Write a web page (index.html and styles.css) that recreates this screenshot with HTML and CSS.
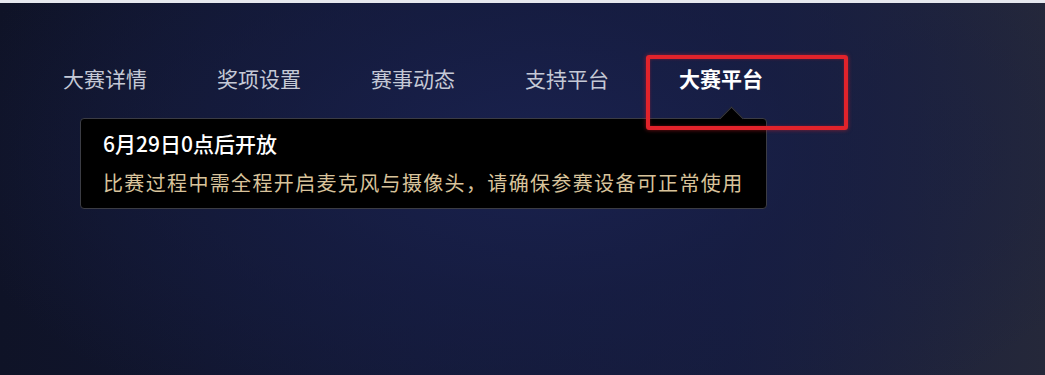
FILE: index.html
```html
<!DOCTYPE html>
<html lang="zh-CN">
<head>
<meta charset="utf-8">
<title>大赛平台</title>
<link rel="stylesheet" href="styles.css">
</head>
<body>
<div class="top-strip"></div>
<main class="stage">
  <nav class="tabs">
    <a class="tab">大赛详情</a>
    <a class="tab">奖项设置</a>
    <a class="tab">赛事动态</a>
    <a class="tab">支持平台</a>
    <a class="tab active">大赛平台</a>
  </nav>
  <div class="tooltip">
    <p class="tip-title">6月29日0点后开放</p>
    <p class="tip-desc">比赛过程中需全程开启麦克风与摄像头，请确保参赛设备可正常使用</p>
  </div>
  <div class="highlight"></div>
</main>
</body>
</html>
```

FILE: styles.css
```css
html, body {
  margin: 0;
  padding: 0;
}
body {
  width: 1045px;
  height: 375px;
  overflow: hidden;
  font-family: "Noto Sans CJK SC", "Noto Sans", sans-serif;
  background: #121628;
}
.top-strip {
  height: 3px;
  background: #e6e8ee;
}
.stage {
  position: relative;
  height: 372px;
  background:
    radial-gradient(ellipse 600px 320px at 540px 150px, rgba(26, 34, 80, 0.9) 0%, rgba(23, 30, 70, 0.65) 45%, rgba(18, 22, 44, 0) 100%),
    linear-gradient(90deg, #0f1327 0%, #131937 40%, #161c3c 70%, #25283a 100%);
  box-sizing: border-box;
  padding-top: 61px;
}
.tabs {
  display: flex;
  gap: 70px;
  padding-left: 63px;
}
.tab {
  font-size: 21px;
  line-height: 28px;
  color: #c5c9d6;
  width: 84px;
  white-space: nowrap;
}
.tab.active {
  color: #ffffff;
  font-weight: 700;
}
.tooltip {
  position: relative;
  margin: 26px 0 0 80px;
  width: 687px;
  box-sizing: border-box;
  background: #000;
  border: 1px solid #3b3c44;
  border-radius: 4px;
  padding: 12px 0 13px 22px;
}
.tooltip::before {
  content: "";
  position: absolute;
  left: 642px;
  top: -9px;
  width: 16px;
  height: 16px;
  background: #000;
  border-top: 1px solid #3b3c44;
  border-left: 1px solid #3b3c44;
  transform: rotate(45deg);
}
.tip-title {
  margin: 0;
  font-size: 21px;
  line-height: 24px;
  font-weight: 500;
  color: #ffffff;
}
.tip-desc {
  margin: 16px 0 0;
  font-size: 20px;
  line-height: 24px;
  color: #d8c39b;
  letter-spacing: 1.35px;
  white-space: nowrap;
}
.highlight {
  position: absolute;
  left: 646px;
  top: 52px;
  width: 202px;
  height: 75px;
  box-sizing: border-box;
  border: 4px solid #e1232b;
  border-radius: 3px;
  box-shadow: 0 0 4px rgba(225, 35, 43, 0.55), inset 0 0 3px rgba(225, 35, 43, 0.4);
}
```
